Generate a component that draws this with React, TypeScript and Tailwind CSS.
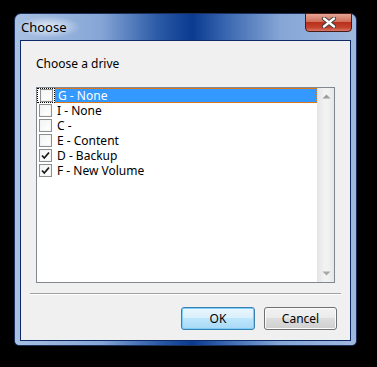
import React from "react";

const DRIVES = [
  { label: "G - None", checked: false },
  { label: "I - None", checked: false },
  { label: "C -", checked: false },
  { label: "E - Content", checked: false },
  { label: "D - Backup", checked: true },
  { label: "F - New Volume", checked: true },
];

function CheckBox({ checked }: { checked: boolean }) {
  return (
    <div className="w-[13px] h-[13px] border border-[#8f8f8f] bg-white flex items-center justify-center shrink-0">
      <div className="w-[11px] h-[11px] border border-[#f4f4f4] bg-gradient-to-br from-[#f4f4f4] to-white flex items-center justify-center">
        {checked && (
          <svg width="9" height="9" viewBox="0 0 9 9">
            <path d="M1 4.5 L3.3 7 L8 1.5" fill="none" stroke="#1b1b1b" strokeWidth="1.8" />
          </svg>
        )}
      </div>
    </div>
  );
}

export default function App() {
  return (
    <div className="w-[377px] h-[367px] bg-black pt-[13px] pl-[14px] overflow-hidden" style={{ fontFamily: '"Noto Sans", "Liberation Sans", sans-serif' }}>
      {/* Window frame */}
      <div className="w-[343px] h-[333px] rounded-t-[7px] rounded-b-[5px] border border-[#1a2f5a] bg-[linear-gradient(90deg,#a8c0e2_0%,#86a6d6_25%,#2b5aa6_42%,#0a3a90_52%,#3a67b0_62%,#86a6d6_78%,#9fb8de_100%)] flex flex-col relative">
        {/* Title bar */}
        <div className="h-[26px] flex items-start relative">
          <div className="absolute left-[2px] top-[2px] w-[64px] h-[22px] rounded-full bg-[radial-gradient(ellipse_at_center,rgba(255,255,255,0.75)_0%,rgba(255,255,255,0)_70%)]" />
          <span className="relative ml-[6px] mt-[5px] text-[13px] leading-[16px] text-black">Choose</span>
          <div className="ml-auto mr-[4px] mt-[-1px] w-[47px] h-[19px] rounded-b-[4px] border border-[#4a1a14] bg-[linear-gradient(180deg,#e4a595_0%,#d2705c_45%,#b8301c_50%,#c4432c_80%,#d9776a_100%)] flex items-center justify-center">
            <svg width="16" height="11" viewBox="0 0 16 11">
              <path d="M3 1.5 L13 9.5 M13 1.5 L3 9.5" stroke="#3a3a3a" strokeWidth="4.2" strokeLinecap="round" />
              <path d="M3 1.5 L13 9.5 M13 1.5 L3 9.5" stroke="#ffffff" strokeWidth="2.4" strokeLinecap="round" />
            </svg>
          </div>
        </div>

        {/* Client area */}
        <div className="mx-[5px] h-[301px] border border-[#0d2a66] bg-[#f0f0f0] text-[12px] text-black flex flex-col">
          <div className="pl-[15px] pt-[15px] h-[31px] leading-[15px]">Choose a drive</div>

          {/* List box */}
          <div className="ml-[15px] mt-[15px] w-[299px] h-[196px] border border-[#828790] bg-white flex">
            <div className="flex-1 flex flex-col">
              {DRIVES.map((d, i) => (
                <div key={d.label} className="h-[15px] flex items-center overflow-hidden">
                  <div className={`h-[15px] w-[18px] flex items-center pl-[2px] shrink-0 ${i === 0 ? "border border-dotted border-black pl-[1px]" : ""}`}>
                    <CheckBox checked={d.checked} />
                  </div>
                  <div
                    className={`flex-1 h-[15px] pl-[2px] overflow-hidden whitespace-nowrap ${
                      i === 0 ? "bg-[#3399ff] text-white border border-dotted border-[#e07b1f] leading-[13px]" : "leading-[15px]"
                    }`}
                  >
                    {d.label}
                  </div>
                </div>
              ))}
            </div>

            {/* Scrollbar */}
            <div className="w-[17px] h-full border-l border-[#e3e3e3] bg-[linear-gradient(90deg,#e6e6e6,#f2f2f2_40%,#f2f2f2_60%,#e6e6e6)] flex flex-col items-center justify-between py-[6px]">
              <svg width="9" height="5" viewBox="0 0 9 5">
                <path d="M0.5 4.5 L4.5 0.5 L8.5 4.5 Z" fill="#9c9c9c" />
              </svg>
              <svg width="9" height="5" viewBox="0 0 9 5">
                <path d="M0.5 0.5 L4.5 4.5 L8.5 0.5 Z" fill="#a8a8a8" />
              </svg>
            </div>
          </div>

          {/* Separator */}
          <div className="ml-[9px] mt-[10px] w-[311px] border-t border-[#a0a0a0] border-b border-b-white" />

          {/* Buttons */}
          <div className="mt-[12px] flex justify-end gap-[9px] pr-[13px]">
            <button className="w-[74px] h-[23px] rounded-[3px] border border-[#3c7fb1] bg-[linear-gradient(180deg,#eaf6fd_0%,#d9f0fc_45%,#bee6fd_50%,#a7d9f5_100%)] shadow-[inset_0_0_0_1px_#7ccdf7] text-[12px] leading-[15px] text-black">
              OK
            </button>
            <button className="w-[73px] h-[23px] rounded-[3px] border border-[#707070] bg-[linear-gradient(180deg,#f2f2f2_0%,#ebebeb_45%,#dddddd_50%,#cfcfcf_100%)] shadow-[inset_0_0_0_1px_#fcfcfc] text-[12px] leading-[15px] text-black">
              Cancel
            </button>
          </div>
        </div>
      </div>
    </div>
  );
}
